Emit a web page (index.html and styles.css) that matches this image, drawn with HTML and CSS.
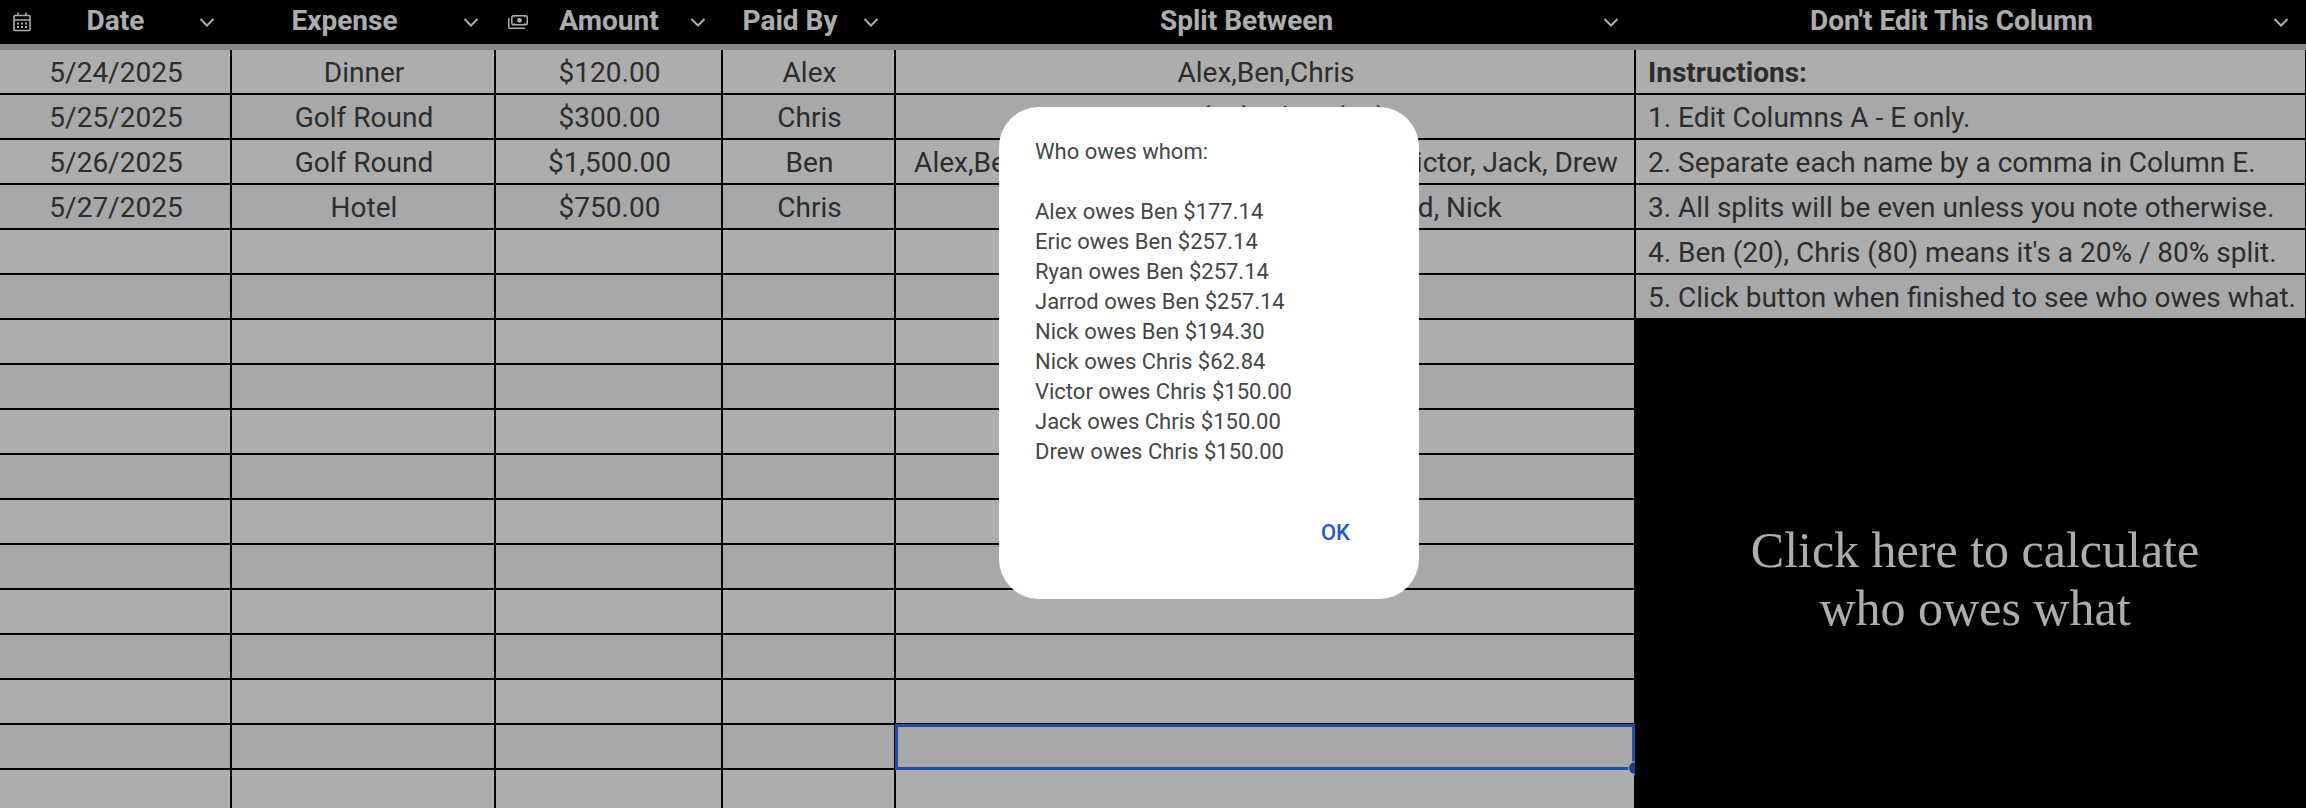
FILE: index.html
```html
<!DOCTYPE html>
<html lang="en">
<head>
    <meta charset="UTF-8">
    <meta name="viewport" content="width=device-width, initial-scale=1.0">
    <title>Expense Splitter</title>
    <link rel="stylesheet" href="styles.css">
</head>
<body>
    <div class="sheet">
        <table class="grid">
            <colgroup>
                <col class="col-date">
                <col class="col-expense">
                <col class="col-amount">
                <col class="col-paid">
                <col class="col-split">
                <col class="col-notes">
            </colgroup>
            <thead>
                <tr>
                    <th>
                        <div class="head with-icon">
                            <svg class="type-icon" viewBox="0 0 20 20" fill="none" stroke="currentColor" stroke-width="1.6">
                                <rect x="2" y="3.5" width="16" height="15" rx="1"/>
                                <path d="M2 8h16M6 .5v3M14 .5v3"/>
                                <path d="M5 11.5h2M9 11.5h2M13 11.5h2M5 15h2M9 15h2M13 15h2" stroke-width="2"/>
                            </svg>
                            <span>Date</span>
                            <button type="button" class="menu" aria-label="Date menu"><svg viewBox="0 0 16 16"><path d="M1.5 5L8 11.5 14.5 5"/></svg></button>
                        </div>
                    </th>
                    <th>
                        <div class="head">
                            <span>Expense</span>
                            <button type="button" class="menu" aria-label="Expense menu"><svg viewBox="0 0 16 16"><path d="M1.5 5L8 11.5 14.5 5"/></svg></button>
                        </div>
                    </th>
                    <th>
                        <div class="head with-icon">
                            <svg class="type-icon" viewBox="0 0 20 20" fill="none" stroke="currentColor" stroke-width="1.5">
                                <rect x="3.8" y="3.8" width="15.5" height="9" rx="1.5"/>
                                <path d="M.8 6v9.3a1 1 0 0 0 1 1H17"/>
                                <circle cx="11.5" cy="8.3" r="2.4" fill="currentColor" stroke="none"/>
                                <path d="M6.2 4v1.6M16.8 4v1.6M6.2 11v1.6M16.8 11v1.6" stroke-width="1"/>
                            </svg>
                            <span>Amount</span>
                            <button type="button" class="menu" aria-label="Amount menu"><svg viewBox="0 0 16 16"><path d="M1.5 5L8 11.5 14.5 5"/></svg></button>
                        </div>
                    </th>
                    <th>
                        <div class="head">
                            <span>Paid By</span>
                            <button type="button" class="menu" aria-label="Paid By menu"><svg viewBox="0 0 16 16"><path d="M1.5 5L8 11.5 14.5 5"/></svg></button>
                        </div>
                    </th>
                    <th>
                        <div class="head">
                            <span>Split Between</span>
                            <button type="button" class="menu" aria-label="Split Between menu"><svg viewBox="0 0 16 16"><path d="M1.5 5L8 11.5 14.5 5"/></svg></button>
                        </div>
                    </th>
                    <th>
                        <div class="head">
                            <span>Don't Edit This Column</span>
                            <button type="button" class="menu" aria-label="Column menu"><svg viewBox="0 0 16 16"><path d="M1.5 5L8 11.5 14.5 5"/></svg></button>
                        </div>
                    </th>
                </tr>
            </thead>
            <tbody>
                <tr><td>5/24/2025</td><td>Dinner</td><td>$120.00</td><td>Alex</td><td>Alex,Ben,Chris</td><td class="note"><b>Instructions:</b></td></tr>
                <tr><td>5/25/2025</td><td>Golf Round</td><td>$300.00</td><td>Chris</td><td>Ben (20), Chris (80)</td><td class="note">1. Edit Columns A - E only.</td></tr>
                <tr><td>5/26/2025</td><td>Golf Round</td><td>$1,500.00</td><td>Ben</td><td>Alex,Ben,Chris, Eric, Ryan, Jarrod, Nick, Victor, Jack, Drew</td><td class="note">2. Separate each name by a comma in Column E.</td></tr>
                <tr><td>5/27/2025</td><td>Hotel</td><td>$750.00</td><td>Chris</td><td>Alex,Ben,Chris, Eric, Ryan, Jarrod, Nick</td><td class="note">3. All splits will be even unless you note otherwise.</td></tr>
                <tr><td></td><td></td><td></td><td></td><td></td><td class="note">4. Ben (20), Chris (80) means it's a 20% / 80% split.</td></tr>
                <tr><td></td><td></td><td></td><td></td><td></td><td class="note">5. Click button when finished to see who owes what.</td></tr>
                <tr>
                    <td></td><td></td><td></td><td></td><td></td>
                    <td class="action" rowspan="11">
                        <button type="button" class="calculate">Click here to calculate<br>who owes what</button>
                    </td>
                </tr>
                <tr><td></td><td></td><td></td><td></td><td></td></tr>
                <tr><td></td><td></td><td></td><td></td><td></td></tr>
                <tr><td></td><td></td><td></td><td></td><td></td></tr>
                <tr><td></td><td></td><td></td><td></td><td></td></tr>
                <tr><td></td><td></td><td></td><td></td><td></td></tr>
                <tr><td></td><td></td><td></td><td></td><td></td></tr>
                <tr><td></td><td></td><td></td><td></td><td></td></tr>
                <tr><td></td><td></td><td></td><td></td><td></td></tr>
                <tr><td></td><td></td><td></td><td></td><td class="selected"><div class="selection"><i class="handle"></i></div></td></tr>
                <tr><td></td><td></td><td></td><td></td><td></td></tr>
            </tbody>
        </table>
    </div>

    <div class="overlay">
        <div class="dialog" role="dialog" aria-modal="true" aria-labelledby="dialog-title">
            <p id="dialog-title">Who owes whom:</p>
            <ul class="debts">
                <li>Alex owes Ben $177.14</li>
                <li>Eric owes Ben $257.14</li>
                <li>Ryan owes Ben $257.14</li>
                <li>Jarrod owes Ben $257.14</li>
                <li>Nick owes Ben $194.30</li>
                <li>Nick owes Chris $62.84</li>
                <li>Victor owes Chris $150.00</li>
                <li>Jack owes Chris $150.00</li>
                <li>Drew owes Chris $150.00</li>
            </ul>
            <div class="dialog-actions">
                <button type="button" class="ok">OK</button>
            </div>
        </div>
    </div>
</body>
</html>
```
FILE: styles.css
```css
* {
    box-sizing: border-box;
}

body {
    margin: 0;
    font-family: Roboto, "Liberation Sans", sans-serif;
    font-size: 28px;
    color: #434343;
    background-color: #fff;
}

button {
    padding: 0;
    border: none;
    background: none;
    color: inherit;
    font: inherit;
    cursor: pointer;
}

.sheet {
    height: 100vh;
    overflow: hidden;
}

/* table */

.grid {
    width: 100%;
    table-layout: fixed;
    border-collapse: separate;
    border-spacing: 0;
}

.col-date {
    width: 232px;
}

.col-expense {
    width: 264px;
}

.col-amount {
    width: 227px;
}

.col-paid {
    width: 173px;
}

.col-notes {
    width: 670px;
}

th {
    height: 50px;
    padding: 0;
    background-color: #000;
    color: #fff;
    border-bottom: 6px solid #c8c8c8;
}

.head {
    display: flex;
    align-items: center;
    gap: 6px;
    height: 44px;
    padding-right: 17px;
}

.with-icon {
    padding-left: 12px;
}

.head span {
    flex: 1;
    line-height: 42px;
    padding-bottom: 2px;
    white-space: nowrap;
}

.type-icon {
    width: 20px;
    height: 20px;
}

.menu {
    width: 16px;
    height: 16px;
}

.menu svg {
    display: block;
    fill: none;
    stroke: #fff;
    stroke-width: 2;
}

td {
    height: 45px;
    padding: 2px 0 0 2px;
    line-height: 41px;
    text-align: center;
    white-space: nowrap;
    border-right: 2px solid #000;
    border-bottom: 2px solid #000;
}

tbody tr:nth-child(even) {
    background-color: #f6f8f9;
}

.note {
    padding-left: 12px;
    text-align: left;
    border-right-width: 1px;
}

.action {
    padding: 0;
    background-color: #000;
    vertical-align: middle;
}

.calculate {
    width: 100%;
    padding: 24px 0 0 10px;
    color: #fff;
    font-family: "Liberation Serif", serif;
    font-size: 50px;
    line-height: 58px;
}

/* active cell outline, drawn over the cell borders */

.selected {
    position: relative;
}

.selection {
    position: absolute;
    top: -1px;
    right: -1px;
    bottom: -2px;
    left: -1px;
    border: 3px solid #3474eb;
}

.handle {
    position: absolute;
    right: -3px;
    bottom: -8px;
    width: 7px;
    height: 14px;
    border: 1px solid #fff;
    border-right: none;
    border-radius: 7px 0 0 7px;
    background-color: #285ac8;
}

/* dialog */

.overlay {
    position: fixed;
    inset: 0;
    display: flex;
    justify-content: center;
    align-items: flex-start;
    padding: 107px 0 0 112px;
    background-color: rgba(0, 0, 0, 0.32);
}

.dialog {
    width: 420px;
    padding: 30px 36px 48px;
    border-radius: 40px;
    background-color: #fff;
    color: #444746;
    font-size: 22px;
    line-height: 30px;
}

.dialog p {
    margin: 0 0 30px;
}

.debts {
    margin: 0;
    padding: 0;
    list-style: none;
}

.dialog-actions {
    display: flex;
    justify-content: flex-end;
    padding-top: 48px;
}

.ok {
    height: 36px;
    padding: 0 33px;
    color: #2957d0;
    font-weight: 500;
}
```
